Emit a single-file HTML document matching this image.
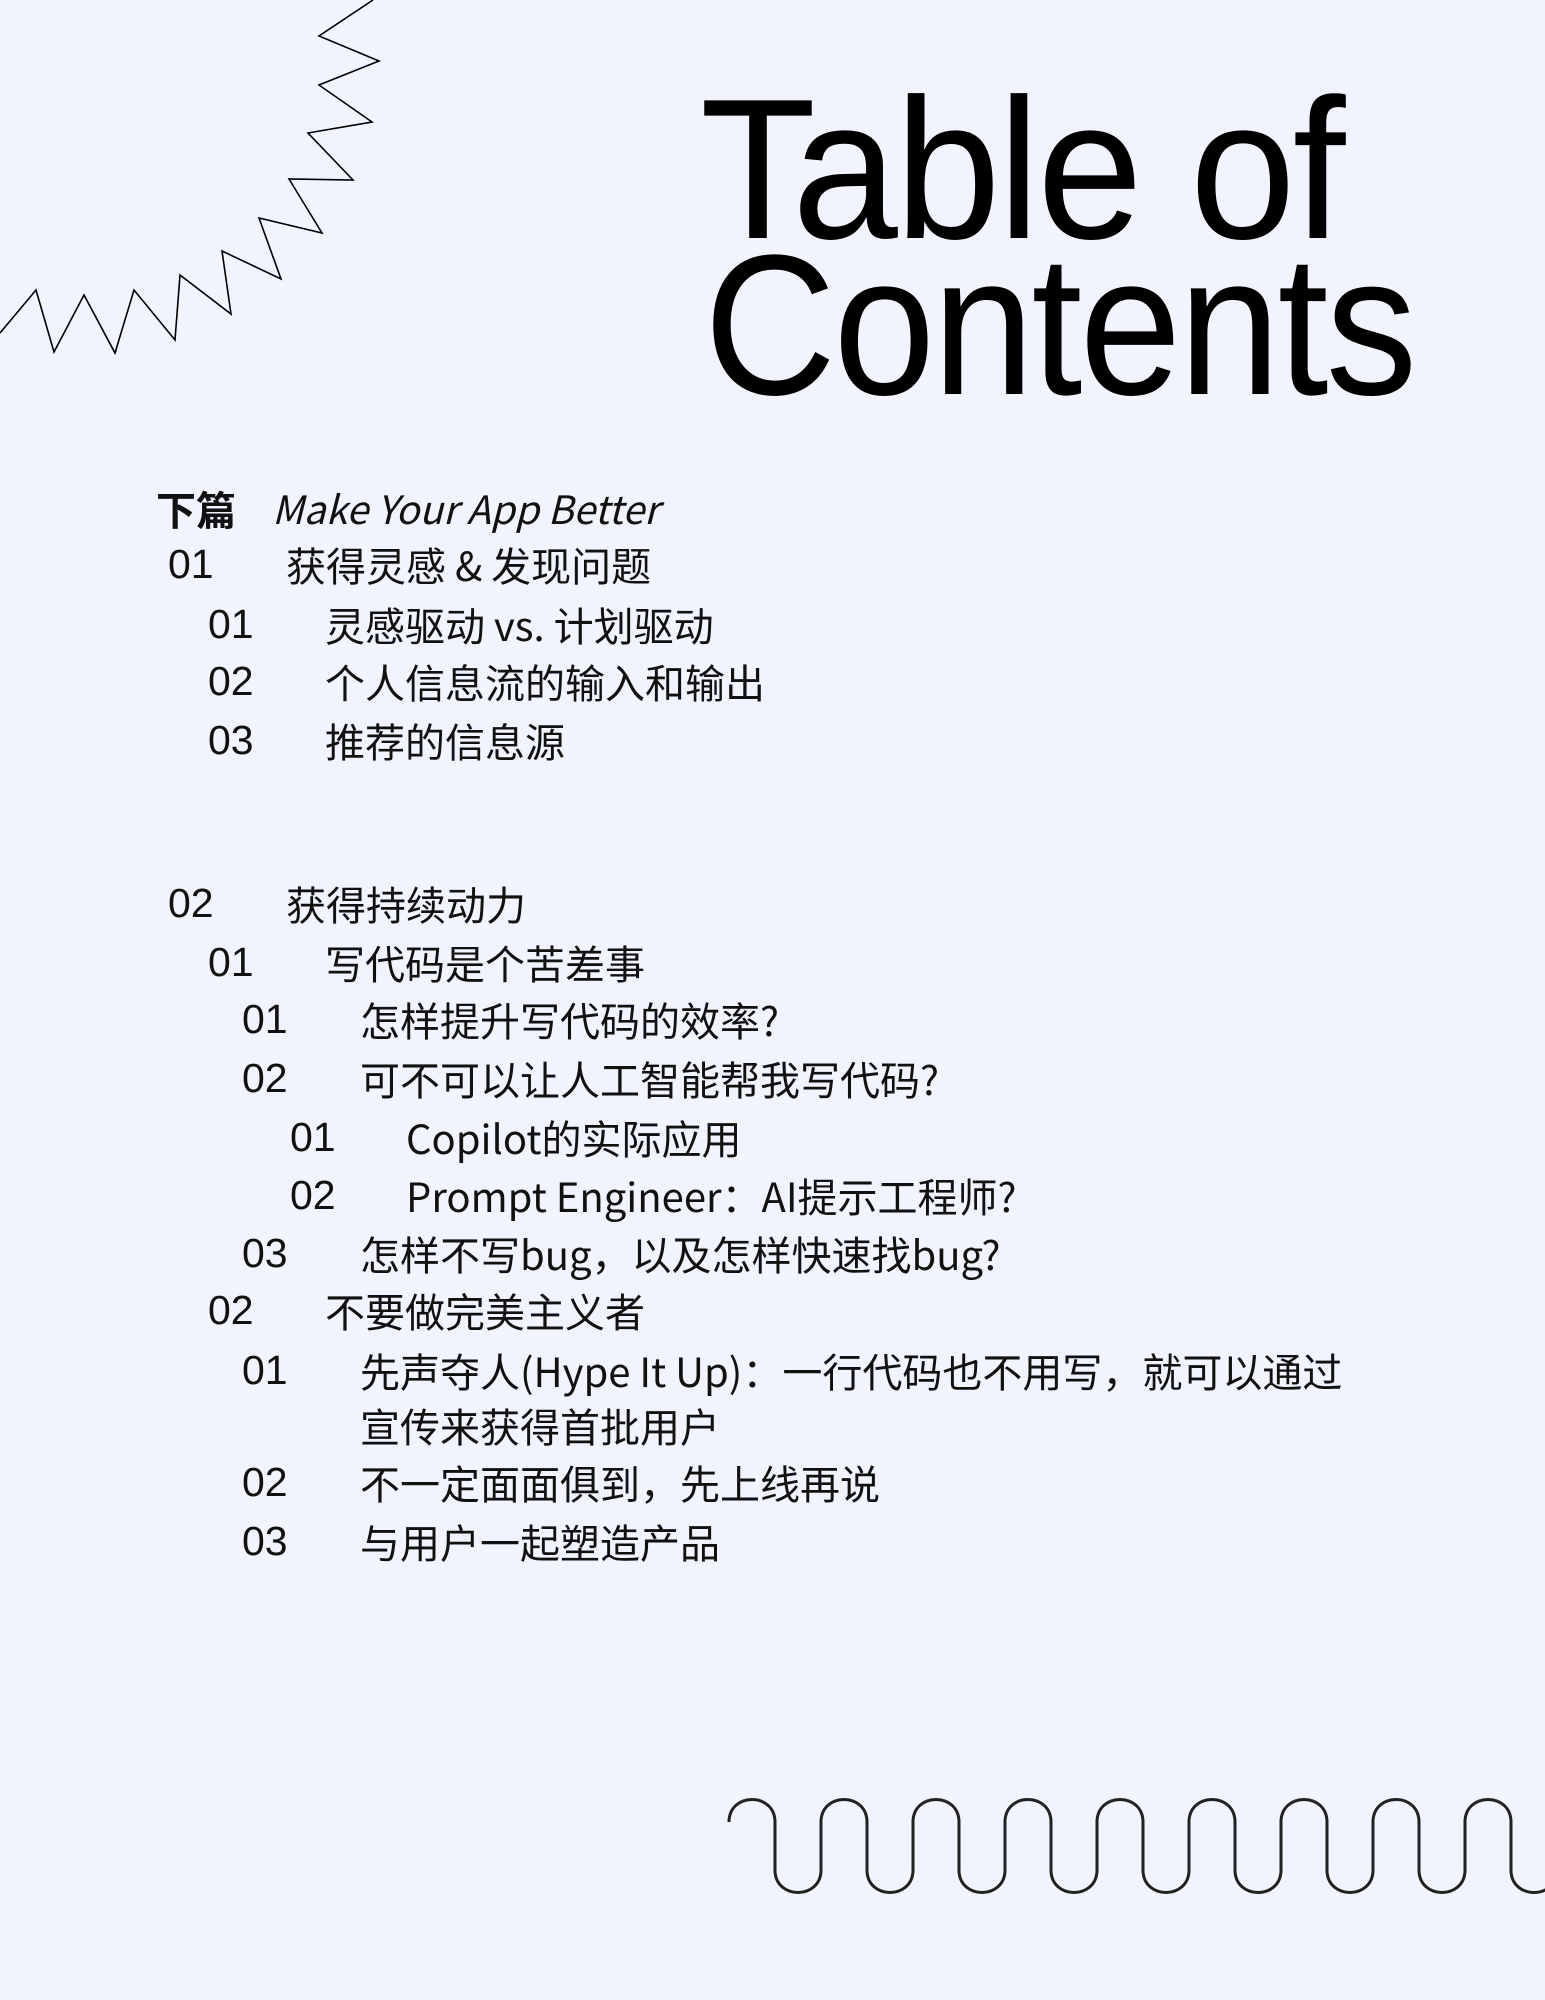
<!DOCTYPE html>
<html><head><meta charset="utf-8">
<style>
html,body{margin:0;padding:0;}
body{width:1545px;height:2000px;background:#f1f4fe;position:relative;overflow:hidden;font-family:"Noto Sans CJK SC","Liberation Sans",sans-serif;color:#111;}
.t{position:absolute;font-family:"Liberation Sans",sans-serif;font-size:200px;line-height:1;color:#000;transform-origin:0 0;letter-spacing:-3px;white-space:nowrap;}
.l{position:absolute;height:50px;line-height:50px;font-size:40px;white-space:nowrap;}
.n{position:absolute;height:50px;line-height:50px;font-family:"Liberation Sans",sans-serif;font-size:41px;white-space:nowrap;}
</style></head><body>
<svg width="1545" height="2000" style="position:absolute;left:0;top:0">
<polyline fill="none" stroke="#000" stroke-width="1.6" points="0,333 36,290 54,352 84,295 115,353 134,290 175,340 180,275 231,314 222,251 281,279 259,218 322,233 289,179 353,180 308,133 372,122 319,85 379,61 319,36 373,0"/>
<path fill="none" stroke="#222" stroke-width="3" d="M729 1822 C729 1792 775 1792 775 1822 L775 1870 C775 1900 821 1900 821 1870 L821 1822 C821 1792 867 1792 867 1822 L867 1870 C867 1900 913 1900 913 1870 L913 1822 C913 1792 959 1792 959 1822 L959 1870 C959 1900 1005 1900 1005 1870 L1005 1822 C1005 1792 1051 1792 1051 1822 L1051 1870 C1051 1900 1097 1900 1097 1870 L1097 1822 C1097 1792 1143 1792 1143 1822 L1143 1870 C1143 1900 1189 1900 1189 1870 L1189 1822 C1189 1792 1235 1792 1235 1822 L1235 1870 C1235 1900 1281 1900 1281 1870 L1281 1822 C1281 1792 1327 1792 1327 1822 L1327 1870 C1327 1900 1373 1900 1373 1870 L1373 1822 C1373 1792 1419 1792 1419 1822 L1419 1870 C1419 1900 1465 1900 1465 1870 L1465 1822 C1465 1792 1511 1792 1511 1822 L1511 1870 C1511 1900 1557 1900 1557 1870"/>
</svg>
<div class="t" style="left:700px;top:70px;transform:scaleX(0.95)">Table of</div>
<div class="t" style="left:704px;top:226px;transform:scaleX(0.915)">Contents</div>

<div class="l" style="left:156px;top:483px;font-weight:bold">下篇</div>
<div class="l" style="left:272px;top:483px;font-style:italic;font-size:39px">Make Your App Better</div>

<div class="n" style="left:168px;top:539px">01</div><div class="l" style="left:286px;top:539px">获得灵感 &amp; 发现问题</div>
<div class="n" style="left:208px;top:599px">01</div><div class="l" style="left:325px;top:599px">灵感驱动 vs. 计划驱动</div>
<div class="n" style="left:208px;top:656px">02</div><div class="l" style="left:325px;top:656px">个人信息流的输入和输出</div>
<div class="n" style="left:208px;top:715px">03</div><div class="l" style="left:325px;top:715px">推荐的信息源</div>

<div class="n" style="left:168px;top:878px">02</div><div class="l" style="left:286px;top:878px">获得持续动力</div>
<div class="n" style="left:208px;top:937px">01</div><div class="l" style="left:325px;top:937px">写代码是个苦差事</div>
<div class="n" style="left:242px;top:994px">01</div><div class="l" style="left:360px;top:994px">怎样提升写代码的效率?</div>
<div class="n" style="left:242px;top:1053px">02</div><div class="l" style="left:360px;top:1053px">可不可以让人工智能帮我写代码?</div>
<div class="n" style="left:290px;top:1112px">01</div><div class="l" style="left:406px;top:1112px">Copilot的实际应用</div>
<div class="n" style="left:290px;top:1170px">02</div><div class="l" style="left:406px;top:1170px">Prompt Engineer：AI提示工程师?</div>
<div class="n" style="left:242px;top:1228px">03</div><div class="l" style="left:360px;top:1228px">怎样不写bug，以及怎样快速找bug?</div>
<div class="n" style="left:208px;top:1285px">02</div><div class="l" style="left:325px;top:1285px">不要做完美主义者</div>
<div class="n" style="left:242px;top:1345px">01</div><div class="l" style="left:360px;top:1345px">先声夺人(Hype It Up)：一行代码也不用写，就可以通过</div>
<div class="l" style="left:360px;top:1400px">宣传来获得首批用户</div>
<div class="n" style="left:242px;top:1457px">02</div><div class="l" style="left:360px;top:1457px">不一定面面俱到，先上线再说</div>
<div class="n" style="left:242px;top:1516px">03</div><div class="l" style="left:360px;top:1516px">与用户一起塑造产品</div>
</body></html>
